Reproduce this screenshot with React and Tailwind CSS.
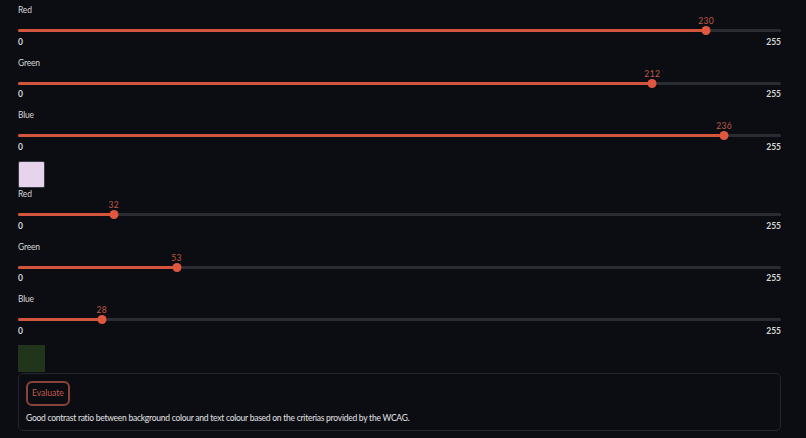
import React from "react";

const FONT = { fontFamily: 'Lato, "Open Sans", sans-serif' };

function Slider({ label, value }) {
  const pct = (value / 255) * 100;
  return (
    <div className="h-[52.5px]">
      <div className="h-[20px] leading-[20px] text-[8.5px] tracking-[-0.2px] text-[#d6d6d8]">{label}</div>
      <div className="relative h-[16px]">
        <div className="absolute left-0 right-0 top-[9px] h-[3px] rounded-full bg-[#2a2c33]" />
        <div
          className="absolute left-0 top-[9px] h-[3px] rounded-full bg-[#d4553e]"
          style={{ width: `${pct}%` }}
        />
        <div
          className="absolute top-[6px] h-[9px] w-[9px] -translate-x-1/2 rounded-full bg-[#e0573f]"
          style={{ left: `${pct}%` }}
        />
        <div
          className="absolute top-[-4px] -translate-x-1/2 text-[8.5px] leading-[10px] text-[#c25a45] tracking-[0.4px]"
          style={{ left: `${pct}%` }}
        >
          {value}
        </div>
      </div>
      <div className="flex h-[12px] items-center justify-between text-[8.5px] font-bold text-[#d6d6d8]">
        <span>0</span>
        <span>255</span>
      </div>
    </div>
  );
}

export default function App() {
  return (
    <div className="min-h-[438px] w-[806px] bg-[#0b0d12]" style={FONT}>
      <div className="w-[763px] ml-[18px]">
        <Slider label="Red" value={230} />
        <Slider label="Green" value={212} />
        <Slider label="Blue" value={236} />
        <div className="mt-[3.5px] h-[27px] w-[27px] rounded-[2px] border border-[#3a3a44] bg-[rgb(230,212,236)]" />
        <div className="mt-[-4px]">
          <Slider label="Red" value={32} />
          <Slider label="Green" value={53} />
          <Slider label="Blue" value={28} />
        </div>
        <div className="mt-[3.5px] h-[27px] w-[27px] bg-[rgb(32,53,28)]" />
        <div className="mt-[1px] h-[58px] rounded-[5px] border border-[#24262d] pl-[7px] pt-[4px]">
          <button className="h-[25px] rounded-[6px] border-2 border-[#8a4338] px-[4px] text-[8.5px] text-[#c45b4c]">
            Evaluate
          </button>
          <div className="mt-[6px] text-[8.5px] leading-[12px] tracking-[-0.25px] text-[#e4e4e6]">
            Good contrast ratio between background colour and text colour based on the criterias provided by the WCAG.
          </div>
        </div>
      </div>
    </div>
  );
}
